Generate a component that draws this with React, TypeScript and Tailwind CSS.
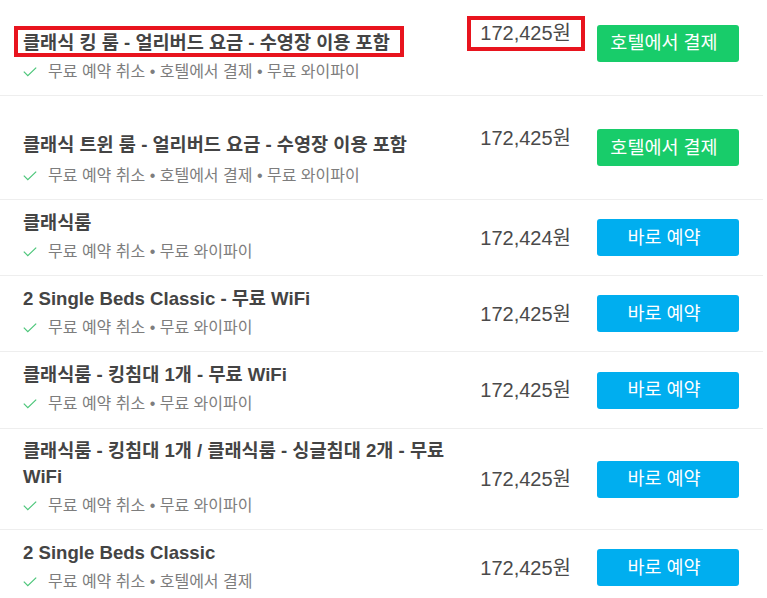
import React from "react";

type Row = {
  title: string;
  sub: string;
  price: string;
  kind: "hotel" | "book";
  leftCls: string;
  subCls: string;
  rightCls: string;
  priceCls: string;
};

const rows: Row[] = [
  {
    title: "클래식 킹 룸 - 얼리버드 요금 - 수영장 이용 포함",
    sub: "무료 예약 취소 • 호텔에서 결제 • 무료 와이파이",
    price: "172,425",
    kind: "hotel",
    leftCls: "pt-[30px] pb-[13px]",
    subCls: "mt-[6px]",
    rightCls: "pb-[9px]",
    priceCls: "mb-[20px]",
  },
  {
    title: "클래식 트윈 룸 - 얼리버드 요금 - 수영장 이용 포함",
    sub: "무료 예약 취소 • 호텔에서 결제 • 무료 와이파이",
    price: "172,425",
    kind: "hotel",
    leftCls: "pt-[36px] pb-[13px]",
    subCls: "mt-[8px]",
    rightCls: "",
    priceCls: "mb-[20px]",
  },
  {
    title: "클래식룸",
    sub: "무료 예약 취소 • 무료 와이파이",
    price: "172,424",
    kind: "book",
    leftCls: "pt-[10px] pb-[13px]",
    subCls: "mt-[6px]",
    rightCls: "",
    priceCls: "",
  },
  {
    title: "2 Single Beds Classic - 무료 WiFi",
    sub: "무료 예약 취소 • 무료 와이파이",
    price: "172,425",
    kind: "book",
    leftCls: "pt-[10px] pb-[13px]",
    subCls: "mt-[6px]",
    rightCls: "",
    priceCls: "",
  },
  {
    title: "클래식룸 - 킹침대 1개 - 무료 WiFi",
    sub: "무료 예약 취소 • 무료 와이파이",
    price: "172,425",
    kind: "book",
    leftCls: "pt-[10px] pb-[14px]",
    subCls: "mt-[6px]",
    rightCls: "",
    priceCls: "",
  },
  {
    title: "클래식룸 - 킹침대 1개 / 클래식룸 - 싱글침대 2개 - 무료 WiFi",
    sub: "무료 예약 취소 • 무료 와이파이",
    price: "172,425",
    kind: "book",
    leftCls: "pt-[9px] pb-[13px]",
    subCls: "mt-[6px]",
    rightCls: "",
    priceCls: "",
  },
  {
    title: "2 Single Beds Classic",
    sub: "무료 예약 취소 • 호텔에서 결제",
    price: "172,425",
    kind: "book",
    leftCls: "pt-[10px] pb-[13px]",
    subCls: "mt-[6px]",
    rightCls: "",
    priceCls: "",
  },
];

function Check() {
  return (
    <svg width="14" height="10" viewBox="0 0 14 10" className="shrink-0">
      <path d="M0.8 4.6 L4.8 8.6 L13.2 0.6" fill="none" stroke="#4cc67a" strokeWidth="1.2" />
    </svg>
  );
}

export default function App() {
  const font = { fontFamily: '"Liberation Sans", "Noto Sans CJK KR", sans-serif' };
  return (
    <div className="w-[767px] h-[598px] overflow-hidden bg-white" style={font}>
      <div className="w-[763px]">
        {rows.map((r, i) => (
          <div key={i} className="flex border-b border-[#eeeeee]">
            <div className={`w-[455px] shrink-0 pl-[23px] ${r.leftCls}`}>
              <div className="text-[18.6px] leading-[26px] font-bold text-[#444444] break-keep">
                {i === 0 ? (
                  <span className="relative inline-block">
                    <span className="absolute left-[-9px] right-[-14px] top-[-4px] bottom-[-1px] border-[4px] border-[#e8141e]" />
                    {r.title}
                  </span>
                ) : (
                  r.title
                )}
              </div>
              <div className={`${r.subCls} flex items-center text-[16px] leading-[20px] text-[#7d7d7d]`}>
                <Check />
                <span className="ml-[11px]">{r.sub}</span>
              </div>
            </div>
            <div className={`flex flex-1 items-center justify-end ${r.rightCls}`}>
              <div className={`relative text-[20px] leading-[24px] text-[#4a4a4a] ${r.priceCls}`}>
                {i === 0 && (
                  <span className="absolute left-[-13px] right-[-14px] top-[-5px] bottom-[-6px] border-[4px] border-[#e8141e]" />
                )}
                {r.price}
                <span>원</span>
              </div>
              <button
                className={`ml-[26px] mr-[24px] flex h-[37px] w-[142px] shrink-0 items-center justify-center rounded-[3px] pr-[8px] text-[18.5px] text-white ${
                  r.kind === "hotel" ? "bg-[#18cc6a]" : "bg-[#00aeef]"
                }`}
              >
                {r.kind === "hotel" ? "호텔에서 결제" : "바로 예약"}
              </button>
            </div>
          </div>
        ))}
      </div>
    </div>
  );
}
